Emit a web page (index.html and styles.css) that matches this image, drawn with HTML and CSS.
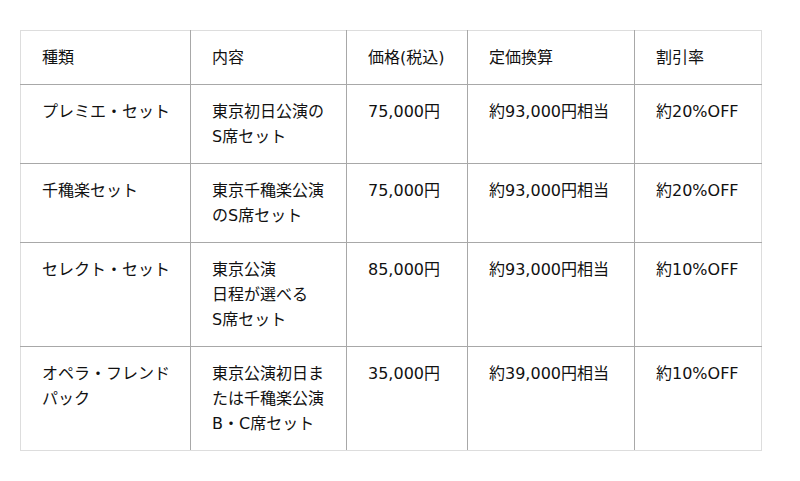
FILE: index.html
```html
<!DOCTYPE html>
<html lang="ja">
<head>
<meta charset="utf-8">
<link rel="stylesheet" href="styles.css">
</head>
<body>
<div class="wrap">
<table class="plans">
<colgroup>
<col class="c1"><col class="c2"><col class="c3"><col class="c4"><col class="c5">
</colgroup>
<thead>
<tr><th>種類</th><th>内容</th><th>価格(税込)</th><th>定価換算</th><th>割引率</th></tr>
</thead>
<tbody>
<tr><td>プレミエ・セット</td><td>東京初日公演のS席セット</td><td>75,000円</td><td>約93,000円相当</td><td>約20%OFF</td></tr>
<tr><td>千穐楽セット</td><td>東京千穐楽公演のS席セット</td><td>75,000円</td><td>約93,000円相当</td><td>約20%OFF</td></tr>
<tr><td>セレクト・セット</td><td>東京公演<br>日程が選べる<br>S席セット</td><td>85,000円</td><td>約93,000円相当</td><td>約10%OFF</td></tr>
<tr><td>オペラ・フレンドパック</td><td>東京公演初日または千穐楽公演B・C席セット</td><td>35,000円</td><td>約39,000円相当</td><td>約10%OFF</td></tr>
</tbody>
</table>
</div>
</body>
</html>
```
FILE: styles.css
```css
html, body {
  margin: 0;
  padding: 0;
  background: #fff;
}
.wrap {
  padding: 30px 20px;
}
.plans {
  border-collapse: collapse;
  width: 742px;
  table-layout: fixed;
  font-family: "DejaVu Sans", "Noto Sans CJK JP", sans-serif;
  font-size: 16px;
  line-height: 25px;
  color: #111;
  border: 1px solid #ddd;
}
.c1 { width: 170px; }
.c2 { width: 156px; }
.c3 { width: 121px; }
.c4 { width: 167px; }
.c5 { width: 127px; }
.plans th,
.plans td {
  border: 1px solid #a8a8a8;
  padding: 14px 19px 14px 21px;
  text-align: left;
  vertical-align: top;
  font-weight: normal;
  word-break: break-all;
}
.plans tr > :first-child { border-left-color: #ddd; }
.plans tr > :last-child { border-right-color: #ddd; }
.plans thead th { border-top-color: #ddd; }
.plans tbody tr:last-child td { border-bottom-color: #ddd; }
```
